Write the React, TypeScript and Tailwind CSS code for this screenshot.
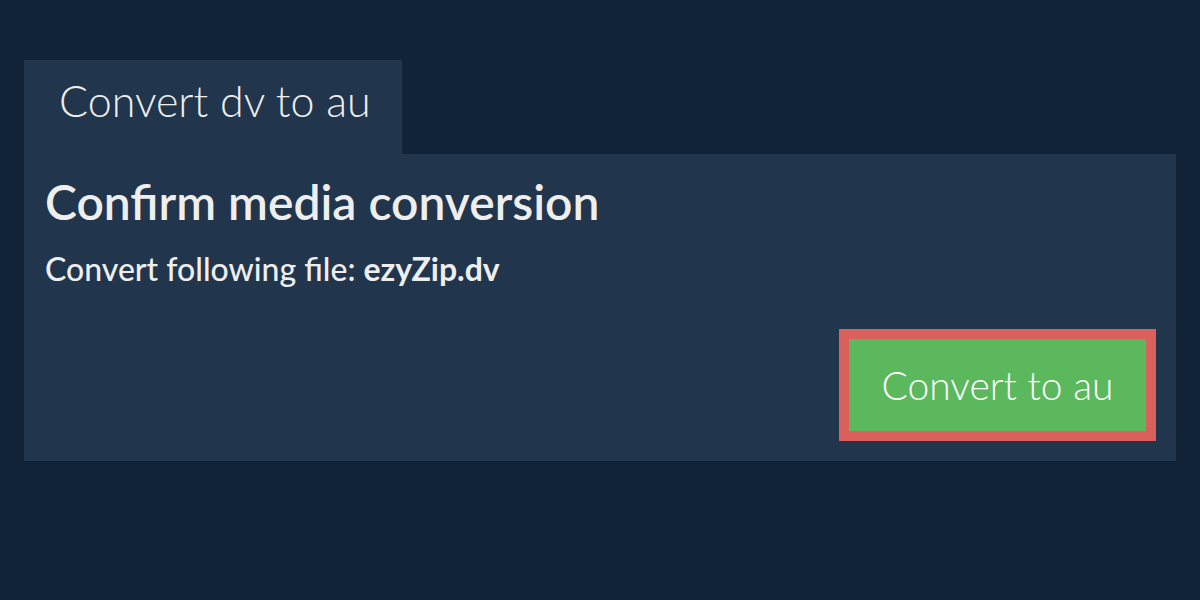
export default function App() {
  return (
    <div className="h-[600px] w-[1200px] bg-[#112339] px-6 pt-[60px] font-['Lato','Open_Sans',sans-serif] text-[#eeeeee]">
      {/* Tab */}
      <div className="flex">
        <div className="h-[94px] w-[378px] bg-[#21354c] pl-[35px] pt-[19px] text-[43px] font-light leading-[43px]">
          Convert dv to au
        </div>
      </div>

      {/* Panel */}
      <div className="flex h-[307px] flex-col bg-[#21354c] px-[21px] pt-[20px]">
        <h1 className="text-[48px] font-semibold leading-[56px]">Confirm media conversion</h1>
        <p className="mt-[21px] text-[32px] font-medium leading-[36px]">
          Convert following file: <span className="font-bold">ezyZip.dv</span>
        </p>
        <div className="mt-auto mb-[20px] flex justify-end">
          <button className="mr-[-1px] flex h-[112px] w-[317px] items-center justify-center border-[10px] border-[#db5f5b] bg-[#5cb85c] text-[39px] font-light leading-[39px] text-white">
            Convert to au
          </button>
        </div>
      </div>
    </div>
  )
}
